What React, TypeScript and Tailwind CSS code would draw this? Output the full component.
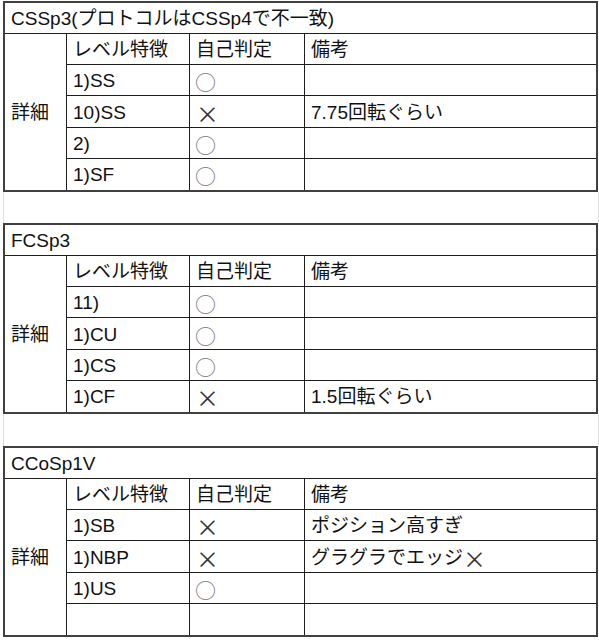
import React from "react";

type Row = [string, string, string];

const FONT = { fontFamily: '"Liberation Sans", "Noto Sans CJK JP", sans-serif' };
const CJK = { fontFamily: '"Noto Sans CJK JP", sans-serif' };

function Mark({ v }: { v: string }) {
  if (v === "○")
    return (
      <span className="text-[21px] leading-[20px] text-[#777] -ml-[1px]" style={CJK}>
        ○
      </span>
    );
  if (v === "×")
    return (
      <span className="text-[23px] leading-[20px] text-[#333]" style={CJK}>
        ×
      </span>
    );
  return <span>{v}</span>;
}

function Cell({
  children,
  className = "",
}: {
  children?: React.ReactNode;
  className?: string;
}) {
  return (
    <div
      className={`flex items-center pl-[6px] pt-[2px] leading-[22px] whitespace-nowrap border-[#1e1e1e] ${className}`}
    >
      {children}
    </div>
  );
}

function Section({ title, rows }: { title: string; rows: Row[] }) {
  return (
    <div className="w-[595px] h-[191px] border-2 border-[#404040] grid grid-cols-[62px_123px_115px_1fr] grid-rows-[repeat(6,1fr)]">
      <Cell className="col-span-4 border-b">{title}</Cell>
      <Cell className="row-span-5 border-r">詳細</Cell>
      <Cell className="border-r border-b">レベル特徴</Cell>
      <Cell className="border-r border-b">自己判定</Cell>
      <Cell className="border-b">備考</Cell>
      {rows.map((r, i) => {
        const last = i === rows.length - 1;
        const b = last ? "" : "border-b";
        return (
          <React.Fragment key={i}>
            <Cell className={`border-r ${b}`}>{r[0]}</Cell>
            <Cell className={`border-r ${b}`}>
              <Mark v={r[1]} />
            </Cell>
            <Cell className={b}>
              {r[2].endsWith("×") ? (
                <>
                  {r[2].slice(0, -1)}
                  <Mark v="×" />
                </>
              ) : (
                r[2]
              )}
            </Cell>
          </React.Fragment>
        );
      })}
    </div>
  );
}

function Gap({ h }: { h: string }) {
  return <div className={`${h} w-[596px] border-l border-r border-[#dcdcdc]`} />;
}

export default function App() {
  return (
    <div
      className="w-[599px] h-[640px] bg-white text-[19px] text-[#111] overflow-hidden pl-[3px] pt-[1px]"
      style={FONT}
    >
      <Section
        title="CSSp3(プロトコルはCSSp4で不一致)"
        rows={[
          ["1)SS", "○", ""],
          ["10)SS", "×", "7.75回転ぐらい"],
          ["2)", "○", ""],
          ["1)SF", "○", ""],
        ]}
      />
      <Gap h="h-[31px]" />
      <Section
        title="FCSp3"
        rows={[
          ["11)", "○", ""],
          ["1)CU", "○", ""],
          ["1)CS", "○", ""],
          ["1)CF", "×", "1.5回転ぐらい"],
        ]}
      />
      <Gap h="h-[32px]" />
      <Section
        title="CCoSp1V"
        rows={[
          ["1)SB", "×", "ポジション高すぎ"],
          ["1)NBP", "×", "グラグラでエッジ×"],
          ["1)US", "○", ""],
          ["", "", ""],
        ]}
      />
    </div>
  );
}
